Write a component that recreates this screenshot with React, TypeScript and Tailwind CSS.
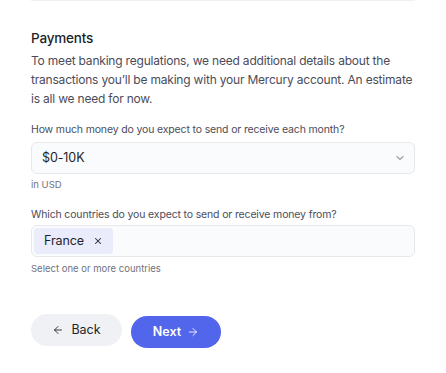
import { ArrowLeft, ArrowRight, ChevronDown, X } from 'lucide-react'

export default function App() {
  return (
    <div className="min-h-screen bg-white" style={{ fontFamily: 'Inter, "Noto Sans", sans-serif' }}>
      <div className="mx-[31px] w-[384px]">
        <div className="h-px bg-[#eef0f3]" />

        <h2 className="mt-[27px] text-[13.5px] leading-5 font-medium tracking-[-0.2px] text-[#1e1f2b]">Payments</h2>
        <p className="mt-[3px] text-[12px] leading-[19px] tracking-[-0.2px] text-[#4b4c5a]">
          To meet banking regulations, we need additional details about the transactions you’ll be making with your
          Mercury account. An estimate is all we need for now.
        </p>

        <label className="mt-[14px] block text-[10.5px] leading-4 tracking-[-0.15px] text-[#4b4c5a]">
          How much money do you expect to send or receive each month?
        </label>
        <div className="mt-[4px] flex h-[32px] items-center justify-between rounded-[6px] border border-[#e6e8ec] bg-[#fafbfc] pl-[10px] pr-[8px]">
          <span className="text-[12.5px] tracking-[-0.1px] text-[#1e1f2b]">$0-10K</span>
          <ChevronDown className="h-[12px] w-[12px] text-[#3a3b47]" strokeWidth={1.75} />
        </div>
        <div className="mt-[4px] text-[9.5px] leading-[14px] text-[#70717e]">in USD</div>

        <label className="mt-[15px] block text-[10.5px] leading-4 tracking-[-0.15px] text-[#4b4c5a]">
          Which countries do you expect to send or receive money from?
        </label>
        <div className="mt-[2px] flex h-[32px] items-center rounded-[6px] border border-[#e6e8ec] bg-[#fafbfc] px-[2px]">
          <span className="flex h-[26px] items-center gap-[9px] rounded-[4px] bg-[#eaecfb] pl-[10px] pr-[10px] text-[12.5px] tracking-[-0.1px] text-[#1e1f2b]">
            France
            <X className="h-[10px] w-[10px] text-[#2b2c38]" strokeWidth={2.5} />
          </span>
        </div>
        <div className="mt-[5px] text-[9.5px] leading-[14px] text-[#70717e]">Select one or more countries</div>

        <div className="mt-[38px] flex items-start gap-[9px]">
          <button className="flex h-[32px] w-[91px] items-center justify-center gap-[7px] rounded-full bg-[#f0f1f4] text-[12.5px] text-[#1e1f2b]">
            <ArrowLeft className="h-[12px] w-[12px]" strokeWidth={1.75} />
            Back
          </button>
          <button className="mt-[2px] flex h-[32px] w-[90px] items-center justify-center gap-[6px] rounded-full bg-[#5266eb] text-[12.5px] font-semibold text-white">
            Next
            <ArrowRight className="h-[12px] w-[12px]" strokeWidth={1.75} />
          </button>
        </div>
      </div>
    </div>
  )
}
